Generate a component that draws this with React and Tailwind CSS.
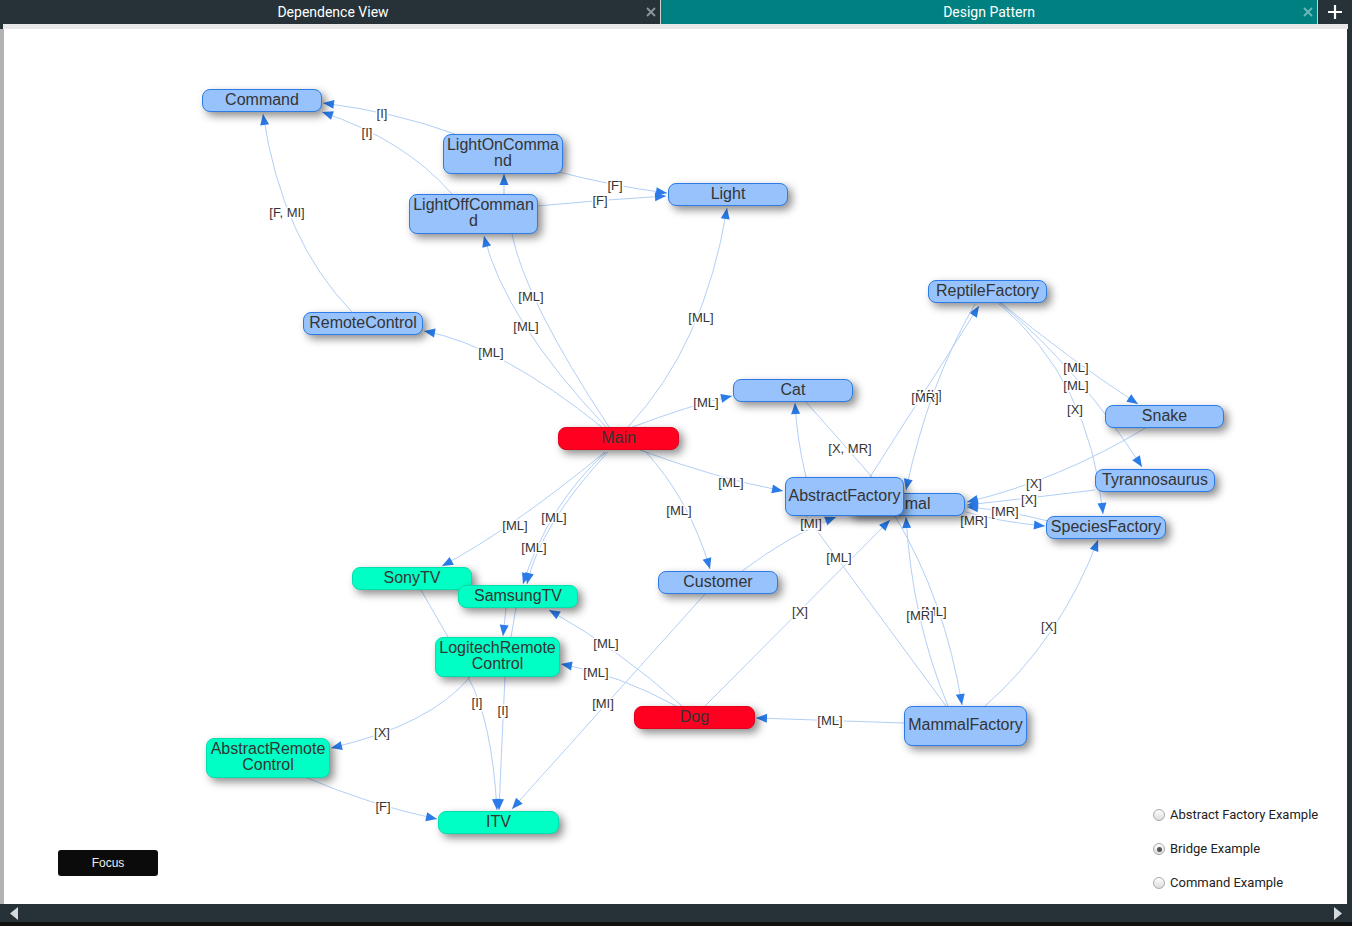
import React from "react";

const OX = 4;
const OY = 29;

const NODES = [
  { id: "Command", x: 202, y: 89, w: 120, h: 23, c: "b", t: ["Command"] },
  { id: "LightOnCommand", x: 443, y: 134, w: 120, h: 40, c: "b", t: ["LightOnComma", "nd"] },
  { id: "LightOffCommand", x: 409, y: 194, w: 129, h: 40, c: "b", t: ["LightOffComman", "d"] },
  { id: "Light", x: 668, y: 183, w: 120, h: 23, c: "b", t: ["Light"] },
  { id: "RemoteControl", x: 303, y: 312, w: 120, h: 23, c: "b", t: ["RemoteControl"] },
  { id: "ReptileFactory", x: 928, y: 280, w: 119, h: 23, c: "b", t: ["ReptileFactory"] },
  { id: "Cat", x: 733, y: 379, w: 120, h: 23, c: "b", t: ["Cat"] },
  { id: "Main", x: 558, y: 427, w: 121, h: 23, c: "r", t: ["Main"] },
  { id: "Snake", x: 1105, y: 405, w: 119, h: 23, c: "b", t: ["Snake"] },
  { id: "Tyrannosaurus", x: 1095, y: 469, w: 120, h: 23, c: "b", t: ["Tyrannosaurus"] },
  { id: "Animal", x: 847, y: 493, w: 118, h: 23, c: "b", t: ["Animal"] },
  { id: "AbstractFactory", x: 785, y: 477, w: 119, h: 39, c: "b", t: ["AbstractFactory"] },
  { id: "SpeciesFactory", x: 1046, y: 516, w: 120, h: 23, c: "b", t: ["SpeciesFactory"] },
  { id: "Customer", x: 658, y: 571, w: 120, h: 23, c: "b", t: ["Customer"] },
  { id: "SonyTV", x: 352, y: 567, w: 120, h: 23, c: "g", t: ["SonyTV"] },
  { id: "SamsungTV", x: 458, y: 585, w: 120, h: 23, c: "g", t: ["SamsungTV"] },
  { id: "LogitechRemoteControl", x: 435, y: 637, w: 125, h: 40, c: "g", t: ["LogitechRemote", "Control"] },
  { id: "Dog", x: 634, y: 706, w: 121, h: 23, c: "r", t: ["Dog"] },
  { id: "MammalFactory", x: 904, y: 706, w: 123, h: 40, c: "b", t: ["MammalFactory"] },
  { id: "AbstractRemoteControl", x: 206, y: 738, w: 124, h: 40, c: "g", t: ["AbstractRemote", "Control"] },
  { id: "ITV", x: 438, y: 811, w: 121, h: 23, c: "g", t: ["ITV"] },
];

const COLORS = {
  b: "bg-[#97c2fc] border-[#2b7ce9]",
  r: "bg-[#ff0020] border-[#e0001c]",
  g: "bg-[#00ffc4] border-[#00e0ad]",
};

const EDGES = [
  { s: [455, 134], c: [395, 112], e: [323, 103], a: 1, l: "[I]", lp: [382, 113] },
  { s: [452, 194], c: [405, 140], e: [322, 112], a: 1, l: "[I]", lp: [367, 132] },
  { s: [352, 312], c: [282, 240], e: [263, 114], a: 1, l: "[F, MI]", lp: [287, 212] },
  { s: [504, 194], e: [504, 174], a: 1 },
  { s: [555, 171], c: [612, 186], e: [667, 193], a: 1, l: "[F]", lp: [615, 185] },
  { s: [537, 206], c: [600, 200], e: [666, 196], a: 1, l: "[F]", lp: [600, 200] },
  { s: [606, 427], c: [505, 320], e: [484, 236], a: 1, l: "[ML]", lp: [526, 326] },
  { s: [609, 427], c: [525, 300], e: [512, 234], a: 0, l: "[ML]", lp: [531, 296] },
  { s: [628, 427], c: [705, 345], e: [727, 208], a: 1, l: "[ML]", lp: [701, 317] },
  { s: [603, 428], c: [500, 345], e: [424, 331], a: 1, l: "[ML]", lp: [491, 352] },
  { s: [630, 428], c: [690, 405], e: [732, 396], a: 1, l: "[ML]", lp: [706, 402] },
  { s: [640, 450], c: [715, 478], e: [783, 491], a: 1, l: "[ML]", lp: [731, 482] },
  { s: [645, 451], c: [690, 500], e: [710, 569], a: 1, l: "[ML]", lp: [679, 510] },
  { s: [605, 452], c: [510, 530], e: [442, 566], a: 1, l: "[ML]", lp: [515, 525] },
  { s: [606, 452], c: [548, 505], e: [523, 584], a: 1, l: "[ML]", lp: [554, 517] },
  { s: [608, 452], c: [540, 525], e: [527, 584], a: 1, l: "[ML]", lp: [534, 547] },
  { s: [806, 477], c: [797, 440], e: [795, 403], a: 1 },
  { s: [805, 401], c: [840, 440], e: [872, 477], a: 0, l: "[X, MR]", lp: [850, 448] },
  { s: [870, 477], e: [979, 306], a: 1, l: "[ML]", lp: [929, 394] },
  { s: [975, 304], c: [928, 385], e: [906, 490], a: 1, l: "[MR]", lp: [925, 397] },
  { s: [1000, 302], c: [1070, 360], e: [1138, 404], a: 1, l: "[ML]", lp: [1076, 367] },
  { s: [1000, 303], c: [1080, 370], e: [1142, 467], a: 1, l: "[ML]", lp: [1076, 385] },
  { s: [998, 303], c: [1090, 380], e: [1103, 514], a: 1, l: "[X]", lp: [1075, 409] },
  { s: [1147, 427], c: [1060, 480], e: [967, 502], a: 1, l: "[X]", lp: [1034, 483] },
  { s: [1095, 490], c: [1030, 498], e: [967, 505], a: 1, l: "[X]", lp: [1029, 499] },
  { s: [1048, 521], c: [1005, 510], e: [967, 507], a: 1, l: "[MR]", lp: [1005, 511] },
  { s: [966, 512], c: [1000, 522], e: [1045, 526], a: 1, l: "[MR]", lp: [974, 520] },
  { s: [985, 706], c: [1060, 640], e: [1098, 540], a: 1, l: "[X]", lp: [1049, 626] },
  { s: [895, 516], c: [945, 600], e: [962, 705], a: 1, l: "[ML]", lp: [934, 611] },
  { s: [948, 706], c: [912, 620], e: [906, 517], a: 1, l: "[MR]", lp: [920, 615] },
  { s: [806, 516], e: [946, 706], a: 0, l: "[ML]", lp: [839, 557] },
  { s: [904, 723], e: [756, 718], a: 1, l: "[ML]", lp: [830, 720] },
  { s: [705, 706], e: [890, 520], a: 1, l: "[X]", lp: [800, 611] },
  { s: [742, 571], c: [790, 535], e: [836, 517], a: 1, l: "[MI]", lp: [811, 523] },
  { s: [705, 594], e: [512, 809], a: 1, l: "[MI]", lp: [603, 703] },
  { s: [682, 706], c: [620, 650], e: [549, 610], a: 1, l: "[ML]", lp: [606, 643] },
  { s: [676, 706], c: [620, 675], e: [561, 664], a: 1, l: "[ML]", lp: [596, 672] },
  { s: [421, 590], e: [448, 637], a: 0 },
  { s: [506, 608], e: [503, 636], a: 1 },
  { s: [516, 608], e: [511, 637], a: 0 },
  { s: [470, 677], c: [430, 725], e: [331, 748], a: 1, l: "[X]", lp: [382, 732] },
  { s: [468, 677], c: [492, 720], e: [497, 810], a: 1, l: "[I]", lp: [477, 702] },
  { s: [505, 677], c: [502, 740], e: [499, 810], a: 1, l: "[I]", lp: [503, 710] },
  { s: [305, 777], c: [370, 805], e: [437, 819], a: 1, l: "[F]", lp: [383, 806] },
];

function arrow(c, e) {
  const dx = e[0] - c[0];
  const dy = e[1] - c[1];
  const len = Math.hypot(dx, dy) || 1;
  const ux = dx / len;
  const uy = dy / len;
  const L = 11;
  const W = 4.5;
  const bx = e[0] - ux * L;
  const by = e[1] - uy * L;
  const px = -uy;
  const py = ux;
  return `${e[0]},${e[1]} ${bx + px * W},${by + py * W} ${bx - px * W},${by - py * W}`;
}

function Graph() {
  return (
    <svg
      className="absolute inset-0"
      width="1343"
      height="875"
      viewBox={`${OX} ${OY} 1343 875`}
    >
      {EDGES.map((ed, i) => {
        const c = ed.c || [(ed.s[0] + ed.e[0]) / 2, (ed.s[1] + ed.e[1]) / 2];
        const d = ed.c
          ? `M${ed.s[0]},${ed.s[1]} Q${c[0]},${c[1]} ${ed.e[0]},${ed.e[1]}`
          : `M${ed.s[0]},${ed.s[1]} L${ed.e[0]},${ed.e[1]}`;
        return (
          <g key={i}>
            <path d={d} fill="none" stroke="#b3cff6" strokeWidth="1" />
            {ed.a ? <polygon points={arrow(c, ed.e)} fill="#2b7ce9" /> : null}
          </g>
        );
      })}
      {EDGES.filter((ed) => ed.l).map((ed, i) => (
        <text
          key={"l" + i}
          x={ed.lp[0]}
          y={ed.lp[1]}
          textAnchor="middle"
          dominantBaseline="central"
          fontFamily="'Liberation Sans', Arial, sans-serif"
          fontSize="13"
          fill="#343434"
          stroke="#ffffff"
          strokeWidth="3"
          paintOrder="stroke"
          strokeLinejoin="round"
        >
          {ed.l}
        </text>
      ))}
    </svg>
  );
}

function Node({ n }) {
  return (
    <div
      className={`absolute flex flex-col items-center justify-center pb-[2px] rounded-[8px] border text-[16px] leading-[16px] text-[#343434] font-['Liberation_Sans',Arial,sans-serif] shadow-[4px_4px_8px_rgba(0,0,0,0.45)] whitespace-nowrap ${COLORS[n.c]}`}
      style={{ left: n.x - OX, top: n.y - OY, width: n.w, height: n.h }}
    >
      {n.t.map((line, i) => (
        <span key={i}>{line}</span>
      ))}
    </div>
  );
}

function Radio({ label, checked }) {
  return (
    <label className="flex items-center gap-[5px] h-[34px]">
      <span className="w-[12px] h-[12px] rounded-full border border-[#a9a9a9] bg-gradient-to-b from-[#ffffff] to-[#dcdcdc] flex items-center justify-center">
        {checked ? <span className="w-[5px] h-[5px] rounded-full bg-[#555555]" /> : null}
      </span>
      <span className="text-[13px] text-[#222222] font-['Roboto',sans-serif]">{label}</span>
    </label>
  );
}

function XIcon({ color }) {
  return (
    <svg width="10" height="10" viewBox="0 0 10 10">
      <path d="M1 1L9 9M9 1L1 9" stroke={color} strokeWidth="1.8" />
    </svg>
  );
}

export default function App() {
  return (
    <div className="w-[1352px] h-[926px] flex flex-col bg-[#263238] overflow-hidden">
      {/* tab bar */}
      <div className="h-[24px] flex font-['Roboto',sans-serif] text-[14px] text-white">
        <div className="w-[660px] bg-[#263238] relative flex items-center justify-center">
          <span className="pl-[6px]">Dependence View</span>
          <span className="absolute right-[4px] top-[7px] flex">
            <XIcon color="#8d979c" />
          </span>
        </div>
        <div className="w-[1px] bg-[#d0d0d0]" />
        <div className="w-[656px] bg-[#008080] relative flex items-center justify-center">
          <span>Design Pattern</span>
          <span className="absolute right-[4px] top-[7px] flex">
            <XIcon color="#6db9b9" />
          </span>
        </div>
        <div className="w-[1px] bg-[#d0d0d0]" />
        <div className="w-[34px] bg-[#263238] flex items-center justify-center">
          <svg width="16" height="16" viewBox="0 0 16 16">
            <path d="M8 1v14M1 8h14" stroke="#ffffff" strokeWidth="2.2" />
          </svg>
        </div>
      </div>
      {/* content */}
      <div className="h-[880px] flex flex-col">
        <div className="h-[5px] flex">
          <div className="w-[3px] bg-[#263238]" />
          <div className="flex-1 bg-[#e8e8e8]" />
          <div className="w-[4px] bg-[#263238]" />
        </div>
        <div className="flex-1 flex">
          <div className="w-[4px] bg-[#b3b3b3]" />
          <div className="relative flex-1 bg-white overflow-hidden">
            <Graph />
            {NODES.map((n) => (
              <Node key={n.id} n={n} />
            ))}
            <button className="absolute left-[54px] top-[821px] w-[100px] h-[26px] rounded-[3px] bg-[#0b0b0b] text-[#eeeeee] text-[12px] font-['Liberation_Sans',Arial,sans-serif] flex items-center justify-center">
              Focus
            </button>
            <div className="absolute left-[1149px] top-[769px] flex flex-col">
              <Radio label="Abstract Factory Example" />
              <Radio label="Bridge Example" checked />
              <Radio label="Command Example" />
            </div>
          </div>
          <div className="w-[5px] bg-[#263238]" />
        </div>
      </div>
      {/* bottom scroll bar */}
      <div className="h-[18px] bg-[#263238] flex items-center justify-between px-[10px]">
        <svg width="8" height="13" viewBox="0 0 8 13">
          <path d="M8 0L0 6.5L8 13Z" fill="#d6d9db" />
        </svg>
        <svg width="8" height="13" viewBox="0 0 8 13">
          <path d="M0 0L8 6.5L0 13Z" fill="#d6d9db" />
        </svg>
      </div>
      <div className="h-[4px] bg-[#111111]" />
    </div>
  );
}
